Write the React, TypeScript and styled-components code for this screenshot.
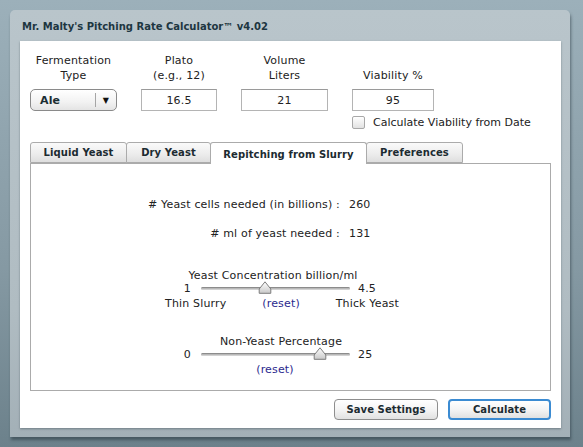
import styled, { createGlobalStyle } from "styled-components";

const GlobalStyle = createGlobalStyle`
  html, body {
    margin: 0;
    padding: 0;
    height: 100%;
  }
  body {
    background: linear-gradient(to bottom, #9cb0ba 0%, #8599a3 60%, #6c818b 100%);
    font-family: "DejaVu Sans", Verdana, sans-serif;
    font-size: 11px;
    letter-spacing: 0.17px;
    color: #222;
  }
  #root {
    height: 100%;
  }
`;

const Page = styled.div`
  height: 100%;
  box-sizing: border-box;
  padding: 10px 0 0 10px;
`;

const Window = styled.div`
  width: 560px;
  height: 427px;
  box-sizing: border-box;
  border-radius: 5px 5px 0 0;
  background: linear-gradient(to bottom, #b9c5cb 0%, #b0bcc2 70%, #a3b0b7 100%);
  box-shadow: 1px 3px 3px rgba(40, 55, 62, 0.55);
  display: flex;
  flex-direction: column;
  padding: 0 9px 9px 10px;
`;

const TitleBar = styled.div`
  height: 30px;
  display: flex;
  align-items: center;
  padding-left: 2px;
  padding-top: 1px;
  font-size: 10px;
  letter-spacing: 0;
  font-weight: bold;
  color: #1d3641;
  white-space: nowrap;
`;

const Body = styled.div`
  flex: 1;
  background: #fff;
  padding: 12px 10px 0 10px;
  box-shadow: 0 1px 2px rgba(60, 75, 82, 0.5);
`;

const FormGrid = styled.div`
  display: grid;
  grid-template-columns: 87px 76px 87px 82px;
  column-gap: 24px;
  align-items: end;
`;

const FieldLabel = styled.div`
  text-align: center;
  line-height: 15px;
  margin-bottom: 6px;
  white-space: nowrap;
`;

const Select = styled.div`
  height: 22px;
  box-sizing: border-box;
  border: 1px solid #8a8a8a;
  border-radius: 5px;
  background: linear-gradient(to bottom, #ffffff 0%, #f2f2f2 60%, #e4e4e4 100%);
  display: flex;
  align-items: center;
  font-weight: bold;
  color: #1b2d33;
`;

const SelectValue = styled.span`
  flex: 1;
  padding-left: 9px;
`;

const SelectArrow = styled.span`
  width: 20px;
  height: 14px;
  border-left: 1px solid #a5a5a5;
  display: flex;
  align-items: center;
  justify-content: center;
  font-size: 8px;
  color: #111;
`;

const TextInput = styled.div`
  height: 22px;
  box-sizing: border-box;
  border: 1px solid #b4b4b4;
  border-top-color: #9a9a9a;
  display: flex;
  align-items: center;
  justify-content: center;
  color: #222;
`;

const CheckRow = styled.div`
  grid-column: 4;
  margin-top: 5px;
  display: flex;
  align-items: center;
  gap: 8px;
  white-space: nowrap;
  letter-spacing: 0;
`;

const CheckBox = styled.span`
  display: block;
  flex: none;
  width: 13px;
  height: 13px;
  box-sizing: border-box;
  border: 1px solid #a8a8a8;
  border-radius: 2px;
  background: linear-gradient(to bottom, #ffffff, #e2e2e2);
`;

const Tabs = styled.div`
  margin-top: 13px;
  display: flex;
  align-items: flex-end;
  height: 21px;
`;

const Tab = styled.div<{ $w: number; $active?: boolean }>`
  width: ${(p) => p.$w}px;
  height: ${(p) => (p.$active ? 22 : 21)}px;
  box-sizing: border-box;
  margin-left: -1px;
  border: 1px solid #ababab;
  border-bottom: ${(p) => (p.$active ? "none" : "1px solid #ababab")};
  border-radius: 3px 3px 0 0;
  background: ${(p) =>
    p.$active ? "#fff" : "linear-gradient(to bottom, #fafafa 0%, #ececec 60%, #dedede 100%)"};
  display: flex;
  align-items: center;
  justify-content: center;
  font-size: 10px;
  letter-spacing: 0.1px;
  font-weight: bold;
  color: #1c2b31;
  white-space: nowrap;
  position: relative;
  z-index: ${(p) => (p.$active ? 2 : 1)};
  margin-bottom: ${(p) => (p.$active ? "-1px" : "0")};
  padding-top: ${(p) => (p.$active ? "1px" : "0")};
  &:first-child {
    margin-left: 0;
  }
`;

const TabPanel = styled.div`
  width: 521px;
  height: 228px;
  box-sizing: border-box;
  border: 1px solid #ababab;
  padding-top: 33px;
`;

const ResultRow = styled.div`
  display: grid;
  grid-template-columns: 309px auto;
  column-gap: 9px;
  line-height: 15px;
  margin-bottom: 14px;
  white-space: nowrap;
`;

const ResultLabel = styled.span`
  text-align: right;
`;

const SliderSection = styled.div<{ $top: number }>`
  margin-top: ${(p) => p.$top}px;
  margin-left: 129px;
  width: 250px;
  line-height: 15px;
`;

const SliderCaption = styled.div<{ $shift: number }>`
  text-align: center;
  width: 230px;
  margin-left: ${(p) => p.$shift}px;
  white-space: nowrap;
`;

const SliderRow = styled.div`
  display: grid;
  grid-template-columns: 33px 149px auto;
  column-gap: 8px;
  align-items: center;
  height: 14px;
  margin-top: -2px;
`;

const SliderEnd = styled.span<{ $right?: boolean }>`
  text-align: ${(p) => (p.$right ? "right" : "left")};
  padding-right: ${(p) => (p.$right ? "2px" : "0")};
`;

const Track = styled.div`
  position: relative;
  height: 3px;
  box-sizing: border-box;
  border-top: 1px solid #8c8c8c;
  border-bottom: 1px solid #d2d2d2;
  background: #b8b8b8;
  border-radius: 2px;
`;

const Thumb = styled.svg`
  position: absolute;
  top: -7px;
  width: 14px;
  height: 13px;
  margin-left: -7px;
`;

const SliderLabels = styled.div`
  display: flex;
  justify-content: space-between;
  width: 234px;
  margin-left: 5px;
  margin-top: 1px;
  white-space: nowrap;
`;

const ResetLink = styled.span`
  color: #2b2a8e;
`;

const CenteredReset = styled.div`
  width: 230px;
  text-align: center;
  margin-top: 1px;
`;

const ButtonRow = styled.div`
  width: 521px;
  margin-top: 8px;
  display: flex;
  justify-content: flex-end;
  gap: 10px;
`;

const Button = styled.div<{ $w: number; $primary?: boolean }>`
  width: ${(p) => p.$w}px;
  height: 21px;
  box-sizing: border-box;
  border: ${(p) => (p.$primary ? "2px solid #3b8bd2" : "1px solid #8e8e8e")};
  border-radius: 4px;
  background: linear-gradient(to bottom, #ffffff 0%, #f3f3f3 55%, #e1e1e1 100%);
  display: flex;
  align-items: center;
  justify-content: center;
  font-size: 10px;
  letter-spacing: 0.1px;
  font-weight: bold;
  color: #1c2b31;
  white-space: nowrap;
`;

type SliderProps = {
  min: string;
  max: string;
  value: number;
};

const Slider = ({ min, max, value }: SliderProps) => (
  <SliderRow>
    <SliderEnd $right>{min}</SliderEnd>
    <Track>
      <Thumb style={{ left: `${value * 100}%` }} viewBox="0 0 14 13">
        <defs>
          <linearGradient id="tg" x1="0" y1="0" x2="0" y2="1">
            <stop offset="0" stopColor="#ffffff" />
            <stop offset="1" stopColor="#c9c9c9" />
          </linearGradient>
        </defs>
        <path d="M7 0.8 L12.8 8 L12.8 12.3 L1.2 12.3 L1.2 8 Z" fill="url(#tg)" stroke="#7d7d7d" strokeWidth="1" />
      </Thumb>
    </Track>
    <SliderEnd>{max}</SliderEnd>
  </SliderRow>
);

const App = () => {
  const concentration = 2.5;
  const nonYeast = 20;

  return (
    <>
      <GlobalStyle />
      <Page>
        <Window>
          <TitleBar>Mr. Malty's Pitching Rate Calculator™ v4.02</TitleBar>
          <Body>
            <FormGrid>
              <FieldLabel>
                Fermentation
                <br />
                Type
              </FieldLabel>
              <FieldLabel>
                Plato
                <br />
                (e.g., 12)
              </FieldLabel>
              <FieldLabel>
                Volume
                <br />
                Liters
              </FieldLabel>
              <FieldLabel>Viability %</FieldLabel>

              <Select>
                <SelectValue>Ale</SelectValue>
                <SelectArrow>▼</SelectArrow>
              </Select>
              <TextInput>16.5</TextInput>
              <TextInput>21</TextInput>
              <TextInput>95</TextInput>

              <CheckRow>
                <CheckBox />
                Calculate Viability from Date
              </CheckRow>
            </FormGrid>

            <Tabs>
              <Tab $w={97}>Liquid Yeast</Tab>
              <Tab $w={85}>Dry Yeast</Tab>
              <Tab $w={157} $active>
                Repitching from Slurry
              </Tab>
              <Tab $w={97}>Preferences</Tab>
            </Tabs>
            <TabPanel>
              <ResultRow>
                <ResultLabel># Yeast cells needed (in billions) :</ResultLabel>
                <span>260</span>
              </ResultRow>
              <ResultRow>
                <ResultLabel># ml of yeast needed :</ResultLabel>
                <span>131</span>
              </ResultRow>

              <SliderSection $top={27}>
                <SliderCaption $shift={-2}>Yeast Concentration billion/ml</SliderCaption>
                <Slider min="1" max="4.5" value={(concentration - 1) / 3.5} />
                <SliderLabels>
                  <span>Thin Slurry</span>
                  <ResetLink>(reset)</ResetLink>
                  <span>Thick Yeast</span>
                </SliderLabels>
              </SliderSection>

              <SliderSection $top={23}>
                <SliderCaption $shift={6}>Non-Yeast Percentage</SliderCaption>
                <Slider min="0" max="25" value={nonYeast / 25} />
                <CenteredReset>
                  <ResetLink>(reset)</ResetLink>
                </CenteredReset>
              </SliderSection>
            </TabPanel>

            <ButtonRow>
              <Button $w={104}>Save Settings</Button>
              <Button $w={103} $primary>
                Calculate
              </Button>
            </ButtonRow>
          </Body>
        </Window>
      </Page>
    </>
  );
};

export default App;
